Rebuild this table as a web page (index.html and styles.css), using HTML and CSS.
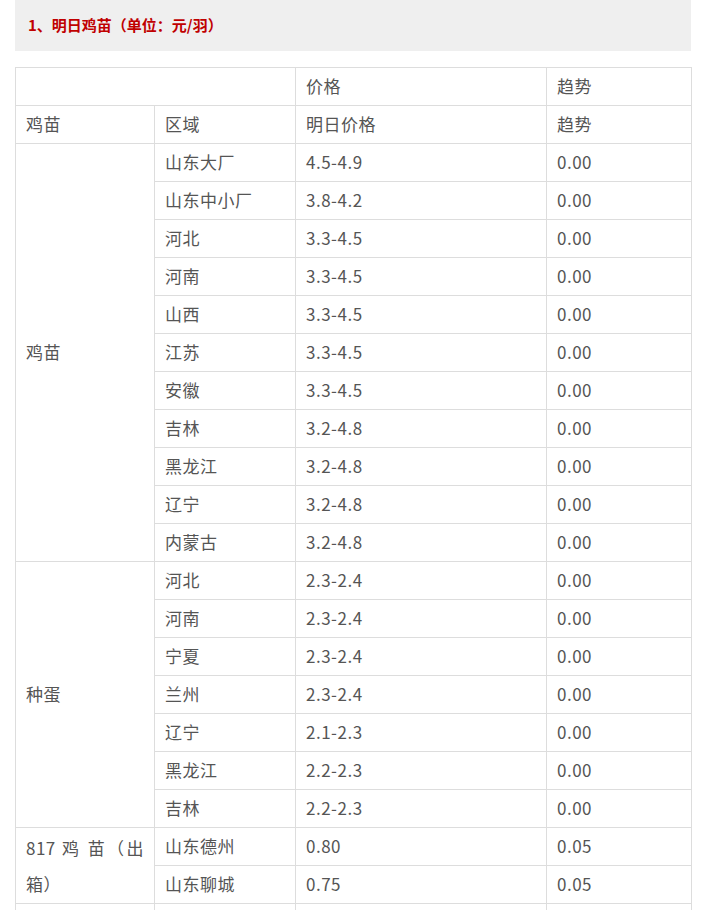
FILE: index.html
```html
<!DOCTYPE html>
<html lang="zh-CN">
<head>
<meta charset="utf-8">
<title>明日鸡苗</title>
<link rel="stylesheet" href="styles.css">
</head>
<body>
<div class="page">
  <div class="section-head"><span class="section-title">1、明日鸡苗（单位：元/羽）</span></div>
  <table class="price-table">
    <colgroup>
      <col class="c1"><col class="c2"><col class="c3"><col class="c4">
    </colgroup>
    <tbody>
      <tr><td colspan="2"></td><td>价格</td><td>趋势</td></tr>
      <tr><td>鸡苗</td><td>区域</td><td>明日价格</td><td>趋势</td></tr>
      <tr><td rowspan="11">鸡苗</td><td>山东大厂</td><td>4.5-4.9</td><td>0.00</td></tr>
      <tr><td>山东中小厂</td><td>3.8-4.2</td><td>0.00</td></tr>
      <tr><td>河北</td><td>3.3-4.5</td><td>0.00</td></tr>
      <tr><td>河南</td><td>3.3-4.5</td><td>0.00</td></tr>
      <tr><td>山西</td><td>3.3-4.5</td><td>0.00</td></tr>
      <tr><td>江苏</td><td>3.3-4.5</td><td>0.00</td></tr>
      <tr><td>安徽</td><td>3.3-4.5</td><td>0.00</td></tr>
      <tr><td>吉林</td><td>3.2-4.8</td><td>0.00</td></tr>
      <tr><td>黑龙江</td><td>3.2-4.8</td><td>0.00</td></tr>
      <tr><td>辽宁</td><td>3.2-4.8</td><td>0.00</td></tr>
      <tr><td>内蒙古</td><td>3.2-4.8</td><td>0.00</td></tr>
      <tr><td rowspan="7">种蛋</td><td>河北</td><td>2.3-2.4</td><td>0.00</td></tr>
      <tr><td>河南</td><td>2.3-2.4</td><td>0.00</td></tr>
      <tr><td>宁夏</td><td>2.3-2.4</td><td>0.00</td></tr>
      <tr><td>兰州</td><td>2.3-2.4</td><td>0.00</td></tr>
      <tr><td>辽宁</td><td>2.1-2.3</td><td>0.00</td></tr>
      <tr><td>黑龙江</td><td>2.2-2.3</td><td>0.00</td></tr>
      <tr><td>吉林</td><td>2.2-2.3</td><td>0.00</td></tr>
      <tr><td rowspan="2" class="justify">817 鸡 苗（出箱）</td><td>山东德州</td><td>0.80</td><td>0.05</td></tr>
      <tr><td>山东聊城</td><td>0.75</td><td>0.05</td></tr>
      <tr><td></td><td></td><td></td><td></td></tr>
    </tbody>
  </table>
</div>
</body>
</html>
```
FILE: styles.css
```css
html, body {
  margin: 0;
  padding: 0;
  background: #ffffff;
}
.page {
  width: 676px;
  margin-left: 15px;
  font-family: "Noto Sans CJK SC", "Noto Sans", sans-serif;
  text-spacing-trim: space-all;
}
.section-head {
  height: 51px;
  background: #efefef;
  padding-left: 13px;
  display: flex;
  align-items: center;
  box-sizing: border-box;
  padding-bottom: 3px;
}
.section-title {
  color: #c00000;
  font-size: 15px;
  font-weight: bold;
  font-family: "Noto Sans CJK TC", "Noto Sans CJK SC", sans-serif;
}
.price-table {
  margin-top: 16px;
  width: 676px;
  border-collapse: collapse;
  table-layout: fixed;
  color: #555;
  font-size: 17px;
  letter-spacing: 0.5px;
}
.c1 { width: 139px; }
.c2 { width: 141px; }
.c3 { width: 251px; }
.c4 { width: 145px; }
.price-table td {
  border: 1px solid #dddddd;
  padding: 1px 10px 2px 10px;
  height: 34px;
  line-height: 34px;
  vertical-align: middle;
  text-align: left;
}
.price-table td.justify {
  text-align: justify;
  line-height: 36px;
  padding: 1px 10px 0 10px;
  font-family: "Noto Sans CJK TC", "Noto Sans CJK SC", sans-serif;
}
```
